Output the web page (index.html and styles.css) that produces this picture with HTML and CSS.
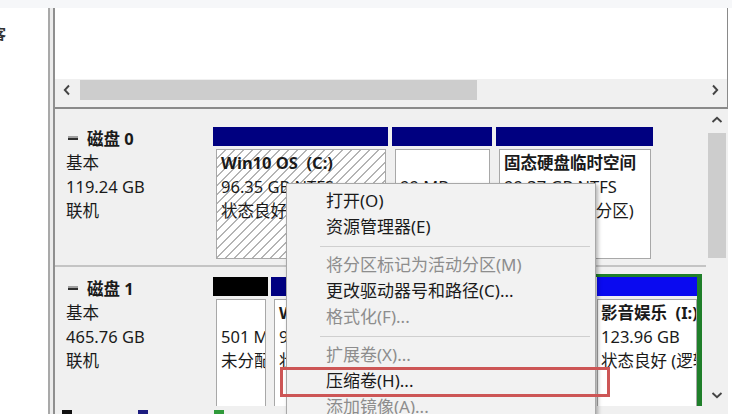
FILE: index.html
```html
<!DOCTYPE html>
<html lang="zh-CN">
<head>
<meta charset="utf-8">
<title>磁盘管理</title>
<link rel="stylesheet" href="styles.css">
</head>
<body>
<div class="top"></div>
<div class="main">
  <div class="leftpane"><span class="cut">客</span></div>
  <div class="divider"></div>
  <div class="work">
    <div class="upper">
      <div class="list"></div>
      <div class="hscroll">
        <div class="arrcell"><svg width="10" height="12" viewBox="0 0 10 12"><path d="M7 1.5 L2.8 6 L7 10.5" fill="none" stroke="#444" stroke-width="1.9"/></svg></div>
        <div class="hthumb"></div>
        <div class="flexfill"></div>
        <div class="arrcell"><svg width="10" height="12" viewBox="0 0 10 12"><path d="M3 1.5 L7.2 6 L3 10.5" fill="none" stroke="#444" stroke-width="1.9"/></svg></div>
      </div>
    </div>
    <div class="lower">
      <div class="disks">
        <div class="disk d0">
          <div class="label">
            <div class="dname"><span class="dicon"></span>磁盘 0</div>
            <div>基本</div>
            <div>119.24 GB</div>
            <div>联机</div>
          </div>
          <div class="parts">
            <div class="part w175">
              <div class="hdr navy"></div>
              <div class="body hatch h110">
                <div class="pname">Win10 OS&nbsp;&nbsp;(C:)</div>
                <div>96.35 GB NTFS</div>
                <div>状态良好 (启动, 页面文件, 故障转储, 主分区)</div>
              </div>
            </div>
            <div class="part w100">
              <div class="hdr navy"></div>
              <div class="body h110">
                <div class="pname">&nbsp;</div>
                <div>99 MB</div>
                <div>状态良好 (EFI 系统分区)</div>
              </div>
            </div>
            <div class="part w157">
              <div class="hdr navy"></div>
              <div class="body h110">
                <div class="pname">固态硬盘临时空间</div>
                <div>99.37 GB NTFS</div>
                <div>状态良好 (主分区)</div>
              </div>
            </div>
          </div>
        </div>
        <div class="disk d1">
          <div class="label">
            <div class="dname"><span class="dicon"></span>磁盘 1</div>
            <div>基本</div>
            <div>465.76 GB</div>
            <div>联机</div>
          </div>
          <div class="parts p1">
            <div class="part w55">
              <div class="hdr black"></div>
              <div class="body h200">
                <div class="pname">&nbsp;</div>
                <div>501 MB</div>
                <div>未分配</div>
              </div>
            </div>
            <div class="part w150">
              <div class="hdr navy"></div>
              <div class="body h200">
                <div class="pname">Win7 系统 (D:)</div>
                <div>97.66 GB NTFS</div>
                <div>状态良好 (主分区)</div>
              </div>
            </div>
            <div class="ext">
              <div class="part w169">
                <div class="hdr blue"></div>
                <div class="body h200">
                  <div class="pname">工作学习 (E:)</div>
                  <div>243.65 GB NTFS</div>
                  <div>状态良好 (逻辑驱动器)</div>
                </div>
              </div>
              <div class="part w100">
                <div class="hdr blue"></div>
                <div class="body h200 flat">
                  <div class="pname">影音娱乐&nbsp;&nbsp;(I:)</div>
                  <div>123.96 GB</div>
                  <div>状态良好 (逻辑驱动器)</div>
                </div>
              </div>
            </div>
          </div>
        </div>
      </div>
      <div class="vscroll">
        <div class="varr"><svg width="12" height="10" viewBox="0 0 12 10"><path d="M1.5 7 L6 2.8 L10.5 7" fill="none" stroke="#444" stroke-width="1.9"/></svg></div>
        <div class="vthumb"></div>
        <div class="flexfill"></div>
        <div class="varr"><svg width="12" height="10" viewBox="0 0 12 10"><path d="M1.5 3 L6 7.2 L10.5 3" fill="none" stroke="#444" stroke-width="1.9"/></svg></div>
      </div>
    </div>
    <div class="legend">
      <div class="lg"><span class="sq sq-black"></span></div>
      <div class="lg"><span class="sq sq-navy"></span></div>
      <div class="lg"><span class="sq sq-green"></span></div>
    </div>
  </div>
  <div class="rightgap"></div>
</div>

<div class="menu">
  <div class="mi">打开(O)</div>
  <div class="mi">资源管理器(E)</div>
  <div class="sep"></div>
  <div class="mi dis">将分区标记为活动分区(M)</div>
  <div class="mi">更改驱动器号和路径(C)...</div>
  <div class="mi dis">格式化(F)...</div>
  <div class="sep"></div>
  <div class="mi dis">扩展卷(X)...</div>
  <div class="mi">压缩卷(H)...</div>
  <div class="mi dis">添加镜像(A)...</div>
</div>
<div class="redbox"></div>
</body>
</html>
```

FILE: styles.css
```css
* { box-sizing: border-box; }

body {
  margin: 0;
  width: 732px;
  height: 414px;
  overflow: hidden;
  background: #ffffff;
  font-family: "Noto Sans", "Noto Sans CJK SC", sans-serif;
  font-size: 16.5px;
  color: #1a1a1a;
  position: relative;
}

.top { height: 8px; background: #f6f7f9; }

.main { display: flex; height: 406px; }

.leftpane {
  width: 48px;
  background: #ffffff;
  overflow: hidden;
  padding-top: 18px;
}
.cut {
  display: block;
  margin-left: -8px;
  font-size: 14px;
  line-height: 16px;
  font-weight: bold;
  color: #333;
}

.divider {
  width: 7px;
  border-left: 2px solid #a9a9a9;
  border-right: 2px solid #8f8f8f;
  background: #ececec;
}

.work {
  width: 673px;
  display: flex;
  flex-direction: column;
}

.upper {
  height: 101px;
  border-right: 1px solid #8a8a8a;
  border-bottom: 2px solid #8a8a8a;
  background: #f0f0f0;
  display: flex;
  flex-direction: column;
}
.list { height: 71px; background: #ffffff; }
.hscroll {
  height: 22px;
  display: flex;
  align-items: center;
}
.arrcell {
  width: 24px;
  height: 22px;
  display: flex;
  align-items: center;
  justify-content: center;
}
.hthumb {
  width: 397px;
  height: 20px;
  margin-left: 1px;
  background: #cdcdcd;
}
.flexfill { flex: 1; }

.lower {
  height: 297px;
  display: flex;
  background: #f0f0f0;
}
.disks {
  flex: 1;
  overflow: hidden;
  padding-top: 8px;
}
.disk { display: flex; }
.d0 { height: 150px; border-bottom: 2px solid #c4c4c4; }

.label {
  width: 157px;
  flex: none;
  padding: 10px 0 0 11px;
  line-height: 24px;
  color: #1a1a1a;
}
.dname { font-weight: bold; }
.dicon {
  display: inline-block;
  width: 10px;
  height: 4px;
  margin: 0 9px 0 2px;
  vertical-align: 5px;
  background: linear-gradient(#a0a0a0 0 45%, #2e2e2e 45%);
}

.parts {
  display: flex;
  gap: 4px;
  padding-top: 10px;
  margin-left: 1px;
  align-items: flex-start;
}
.p1 { gap: 3px; }

.part { display: flex; flex-direction: column; flex: none; }
.w55 { width: 55px; }
.w100 { width: 100px; }
.w150 { width: 150px; }
.w157 { width: 157px; }
.w169 { width: 169px; }
.w175 { width: 175px; }

.hdr { height: 19px; }
.navy { background: #000080; }
.black { background: #000000; }
.blue { background: #0a0af0; }

.body {
  margin: 3px 2px 0 3px;
  border: 1px solid #a8a8a8;
  background: #ffffff;
  padding: 1px 4px;
  line-height: 24px;
  white-space: nowrap;
  overflow: hidden;
}
.body.flat { margin: 3px 0 0 0; padding-left: 3px; }
.h110 { height: 110px; }
.h200 { height: 200px; }
.pname { font-weight: bold; }

.hatch {
  background: repeating-linear-gradient(135deg, #ffffff 0 5px, #b4b4b4 5px 6.4px);
}

.ext {
  display: flex;
  gap: 4px;
  margin-top: -3px;
  border-top: 3px solid #1f7f2a;
  border-right: 5px solid #1f7f2a;
}

.vscroll {
  width: 22px;
  display: flex;
  flex-direction: column;
  align-items: center;
}
.varr {
  height: 22px;
  width: 22px;
  display: flex;
  align-items: center;
  justify-content: center;
}
.vthumb {
  width: 18px;
  height: 125px;
  margin-top: 2px;
  background: #cdcdcd;
}

.legend {
  height: 8px;
  display: flex;
  padding-left: 7px;
  background: #f0f0f0;
  overflow: hidden;
}
.lg { width: 76px; padding-top: 4px; }
.sq { display: block; width: 10px; height: 10px; }
.sq-black { background: #111; }
.sq-navy { background: #1c1c80; }
.sq-green { background: #2f9a3a; }

.rightgap { width: 4px; background: #ffffff; }

.menu {
  position: absolute;
  left: 286px;
  top: 183px;
  width: 310px;
  height: 240px;
  background: #f2f2f2;
  border: 1px solid #a8a8a8;
  box-shadow: 2px 2px 4px rgba(0, 0, 0, 0.3);
  padding-top: 4px;
}
.mi {
  height: 26px;
  line-height: 26px;
  padding-left: 39px;
  font-size: 17px;
  color: #1a1a1a;
  white-space: nowrap;
}
.mi.dis { color: #8d8d8d; }
.sep {
  height: 12px;
  margin: 0 5px 0 33px;
  background: linear-gradient(#cfcfcf, #cfcfcf) center / 100% 1px no-repeat;
}

.redbox {
  position: absolute;
  left: 280px;
  top: 367px;
  width: 330px;
  height: 30px;
  border: 3px solid #cd5656;
}
```
